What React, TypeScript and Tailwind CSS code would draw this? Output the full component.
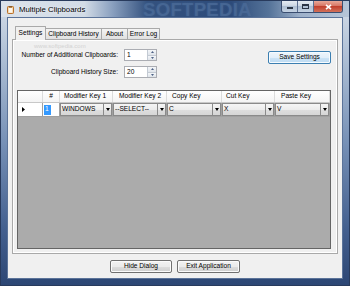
import type { ReactNode } from "react";

const FONT = "font-['Liberation_Sans',Arial,sans-serif]";

const columns = [
  { label: "#", width: "w-[17px]", pad: "justify-center" },
  { label: "Modifier Key 1", width: "w-[53px]", pad: "pl-[4px]" },
  { label: "Modifier Key 2", width: "w-[54px]", pad: "pl-[6px]" },
  { label: "Copy Key", width: "w-[55px]", pad: "pl-[5px]" },
  { label: "Cut Key", width: "w-[53px]", pad: "pl-[4px]" },
  { label: "Paste Key", width: "w-[55px]", pad: "pl-[6px]" },
];

const combos = [
  { value: "WINDOWS", width: "w-[53px]" },
  { value: "--SELECT--", width: "w-[54px]" },
  { value: "C", width: "w-[55px]" },
  { value: "X", width: "w-[53px]" },
  { value: "V", width: "w-[55px]" },
];

export default function App() {
  return (
    <div
      className={`${FONT} flex h-[286px] w-[350px] flex-col overflow-hidden border border-[#283a5c] bg-[linear-gradient(180deg,#d4dde9_0%,#aebfd5_20%,#7690b6_50%,#44608f_80%,#2c4674_100%)]`}
    >
      <TitleBar />

      <div className="mb-[6px] ml-[6px] mr-[6px] flex flex-1 flex-col border border-[#5b7399] bg-[#f0f0f0] px-[4px] pt-[8px]">
        <div className="relative z-10 flex h-[13px] items-end pl-[3px]">
          <Tab selected w="w-[31px]">Settings</Tab>
          <Tab w="w-[57px]">Clipboard History</Tab>
          <Tab w="w-[27px]">About</Tab>
          <Tab w="w-[33px]">Error Log</Tab>
        </div>

        <div className="relative flex h-[215px] flex-col border border-[#a9a9a9] bg-[#f0f0f0] pb-[4px] pl-[4px] pr-[6px] pt-[9px] shadow-[inset_1px_1px_0_#ffffff,inset_-1px_-1px_0_#ffffff]">
          <span className="absolute left-[21px] top-[3px] text-[6px] leading-none text-[#d2d2d2]">
            www.softpedia.com
          </span>

          <div className="flex h-[41px] items-start justify-between">
            <div className="flex flex-col gap-[5px]">
              <Field label="Number of Additional Clipboards:" value="1" />
              <Field label="Clipboard History Size:" value="20" />
            </div>
            <button
              type="button"
              className="mt-[2px] flex h-[13px] w-[63px] items-center justify-center rounded-[2px] border border-[#3c7fb1] bg-[linear-gradient(180deg,#eef6fc_0%,#e2effa_50%,#cde4f6_50%,#bcdaf2_100%)] text-[6.6px] leading-none text-black shadow-[inset_0_0_0_1px_#f6fbff]"
            >
              Save Settings
            </button>
          </div>

          <div className="flex flex-1 flex-col border border-[#656565] bg-[#ababab]">
            <div className="flex h-[12px] border-b border-[#c8c8c8] bg-[linear-gradient(180deg,#ffffff,#f4f4f4)]">
              <div className="w-[25px] border-r border-[#dcdcdc]" />
              {columns.map((c) => (
                <div
                  key={c.label}
                  className={`flex items-center border-r border-[#dcdcdc] text-[6.6px] leading-none text-black ${c.width} ${c.pad}`}
                >
                  {c.label}
                </div>
              ))}
            </div>

            <div className="flex h-[14px] border-b border-[#a0a0a0] bg-white">
              <div className="flex w-[25px] items-center border-r border-[#a0a0a0] pl-[4px]">
                <svg width="3" height="5" viewBox="0 0 3 5">
                  <polygon points="0,0 3,2.5 0,5" fill="#000" />
                </svg>
              </div>
              <div className="flex w-[17px] items-center border-r border-[#a0a0a0] pl-[1px]">
                <span className="flex h-[10px] w-[7px] items-center bg-[#3399ff] pl-[1px] text-[6.6px] leading-none text-white">
                  1
                </span>
              </div>
              {combos.map((c) => (
                <div key={c.value} className={`border-r border-[#a0a0a0] ${c.width}`}>
                  <Combo value={c.value} />
                </div>
              ))}
            </div>
          </div>
        </div>

        <div className="mt-[6px] flex justify-center gap-[5px]">
          <PlainButton w="w-[62px]">Hide Dialog</PlainButton>
          <PlainButton w="w-[63px]">Exit Application</PlainButton>
        </div>
      </div>
    </div>
  );
}

function TitleBar() {
  return (
    <div className="relative flex h-[16px] shrink-0 items-start bg-[linear-gradient(90deg,#dbe2eb_0%,#d2dbe6_24%,#8aa0bf_32%,#34527f_42%,#2d4b7a_66%,#557399_77%,#9eb1ca_86%,#b6c5d8_100%)]">
      <span className="pointer-events-none absolute left-[142px] top-[0px] text-[18.7px] font-bold leading-none tracking-[0.2px] text-[#4f6f9c]/60 [text-shadow:0_0_2px_#3f5f8c]">
        SOFTPEDIA
      </span>
      <svg className="relative ml-[6px] mt-[5px]" width="7" height="8" viewBox="0 0 7 8">
        <rect x="0.5" y="0.5" width="6" height="7" rx="0.8" fill="#f1c27e" stroke="#b9702c" />
        <rect x="1.5" y="1.8" width="4" height="5" fill="#fbf6ee" />
        <rect x="2" y="0" width="3" height="1.6" fill="#8a5a2a" />
      </svg>
      <span className="relative ml-[5px] mt-[5px] text-[7.8px] leading-none text-black [text-shadow:0_0_3px_#ffffff]">
        Multiple Clipboards
      </span>
      <div className="relative ml-auto mr-[6px] flex h-[12px] overflow-hidden rounded-b-[3px] border border-t-0 border-[#3a4d70]">
        <div className="flex w-[16px] items-end justify-center border-r border-[#5a6e90] bg-[linear-gradient(180deg,#e4ebf3_0%,#c8d4e2_50%,#aebfd3_50%,#c4d2e2_100%)] pb-[3px]">
          <span className="h-[2px] w-[6px] bg-[#2a3546]" />
        </div>
        <div className="flex w-[16px] items-center justify-center border-r border-[#5a6e90] bg-[linear-gradient(180deg,#e4ebf3_0%,#c8d4e2_50%,#aebfd3_50%,#c4d2e2_100%)]">
          <span className="h-[5px] w-[7px] border border-t-2 border-[#2a3546]" />
        </div>
        <div className="flex w-[28px] items-center justify-center bg-[linear-gradient(180deg,#e8a898_0%,#d6705f_50%,#c2402e_50%,#d2715a_100%)]">
          <svg width="7" height="6" viewBox="0 0 7 6">
            <path d="M1 0.8 L6 5.2 M6 0.8 L1 5.2" stroke="#ffffff" strokeWidth="1.6" />
          </svg>
        </div>
      </div>
    </div>
  );
}

function Tab({ children, selected, w }: { children: ReactNode; selected?: boolean; w: string }) {
  if (selected) {
    return (
      <div
        className={`-mb-[1px] flex h-[14px] items-center justify-center rounded-t-[1px] border border-b-0 border-[#a9a9a9] bg-[#f0f0f0] text-[6.6px] leading-none text-black ${w}`}
      >
        {children}
      </div>
    );
  }
  return (
    <div
      className={`-ml-[1px] flex h-[11px] items-center justify-center rounded-t-[1px] border border-b-0 border-[#a9a9a9] bg-[linear-gradient(180deg,#f4f4f4,#e0e0e0)] text-[6.6px] leading-none text-black ${w}`}
    >
      {children}
    </div>
  );
}

function Field({ label, value }: { label: string; value: string }) {
  return (
    <div className="flex h-[12px] items-center gap-[6px]">
      <span className="w-[101px] text-right text-[6.6px] leading-none text-black">{label}</span>
      <div className="flex h-[12px] w-[33px] border border-[#abadb3] bg-white">
        <span className="flex flex-1 items-center pl-[2px] text-[6.6px] leading-none text-black">
          {value}
        </span>
        <div className="flex w-[9px] flex-col border-l border-[#c3cad3]">
          <div className="flex flex-1 items-center justify-center border-b border-[#c3cad3] bg-[linear-gradient(180deg,#f4f6f9,#dfe4ea)]">
            <svg width="3" height="2" viewBox="0 0 3 2">
              <polygon points="1.5,0 3,2 0,2" fill="#4d6185" />
            </svg>
          </div>
          <div className="flex flex-1 items-center justify-center bg-[linear-gradient(180deg,#f4f6f9,#dfe4ea)]">
            <svg width="3" height="2" viewBox="0 0 3 2">
              <polygon points="0,0 3,0 1.5,2" fill="#4d6185" />
            </svg>
          </div>
        </div>
      </div>
    </div>
  );
}

function Combo({ value }: { value: string }) {
  return (
    <div className="flex h-full border border-[#8a8a8a] bg-[linear-gradient(180deg,#f5f5f5_0%,#ececec_50%,#dedede_50%,#d6d6d6_100%)]">
      <span className="flex flex-1 items-center overflow-hidden whitespace-nowrap pl-[1px] text-[6.6px] leading-none text-black">
        {value}
      </span>
      <div className="flex w-[8px] items-center justify-center border-l border-[#8a8a8a]">
        <svg width="4" height="3" viewBox="0 0 4 3">
          <polygon points="0,0 4,0 2,3" fill="#000" />
        </svg>
      </div>
    </div>
  );
}

function PlainButton({ children, w }: { children: ReactNode; w: string }) {
  return (
    <button
      type="button"
      className={`flex h-[13px] items-center justify-center rounded-[2px] border border-[#707070] bg-[linear-gradient(180deg,#f2f2f2_0%,#ebebeb_50%,#dddddd_50%,#cfcfcf_100%)] text-[6.6px] leading-none text-black shadow-[inset_0_0_0_1px_#fbfbfb] ${w}`}
    >
      {children}
    </button>
  );
}
